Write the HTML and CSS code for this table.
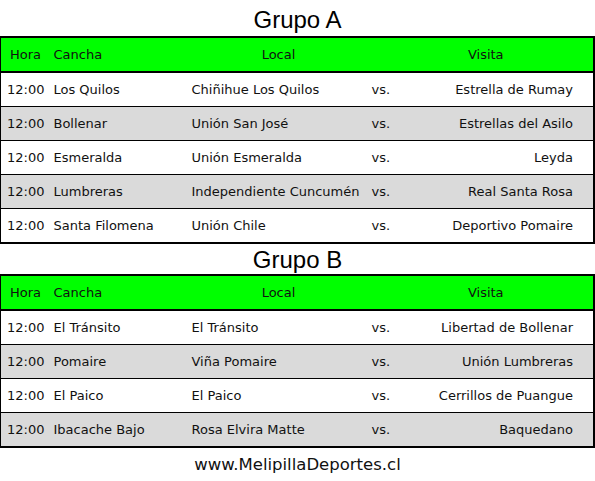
FILE: index.html
```html
<!DOCTYPE html>
<html lang="es">
<head>
<meta charset="utf-8">
<title>Fixture</title>
<link rel="stylesheet" href="styles.css">
</head>
<body>
<div class="page">
  <h2 class="group-title">Grupo A</h2>
  <table class="fixture">
    <colgroup><col class="c-hora"><col class="c-cancha"><col class="c-local"><col class="c-vs"><col class="c-visita"></colgroup>
    <thead>
      <tr><th class="hora">Hora</th><th class="cancha">Cancha</th><th class="local">Local</th><th></th><th class="visita">Visita</th></tr>
    </thead>
    <tbody>
      <tr><td class="hora">12:00</td><td class="cancha">Los Quilos</td><td class="local">Chiñihue Los Quilos</td><td class="vs">vs.</td><td class="visita">Estrella de Rumay</td></tr>
      <tr class="alt"><td class="hora">12:00</td><td class="cancha">Bollenar</td><td class="local">Unión San José</td><td class="vs">vs.</td><td class="visita">Estrellas del Asilo</td></tr>
      <tr><td class="hora">12:00</td><td class="cancha">Esmeralda</td><td class="local">Unión Esmeralda</td><td class="vs">vs.</td><td class="visita">Leyda</td></tr>
      <tr class="alt"><td class="hora">12:00</td><td class="cancha">Lumbreras</td><td class="local">Independiente Cuncumén</td><td class="vs">vs.</td><td class="visita">Real Santa Rosa</td></tr>
      <tr><td class="hora">12:00</td><td class="cancha">Santa Filomena</td><td class="local">Unión Chile</td><td class="vs">vs.</td><td class="visita">Deportivo Pomaire</td></tr>
    </tbody>
  </table>
  <h2 class="group-title">Grupo B</h2>
  <table class="fixture">
    <colgroup><col class="c-hora"><col class="c-cancha"><col class="c-local"><col class="c-vs"><col class="c-visita"></colgroup>
    <thead>
      <tr><th class="hora">Hora</th><th class="cancha">Cancha</th><th class="local">Local</th><th></th><th class="visita">Visita</th></tr>
    </thead>
    <tbody>
      <tr><td class="hora">12:00</td><td class="cancha">El Tránsito</td><td class="local">El Tránsito</td><td class="vs">vs.</td><td class="visita">Libertad de Bollenar</td></tr>
      <tr class="alt"><td class="hora">12:00</td><td class="cancha">Pomaire</td><td class="local">Viña Pomaire</td><td class="vs">vs.</td><td class="visita">Unión Lumbreras</td></tr>
      <tr><td class="hora">12:00</td><td class="cancha">El Paico</td><td class="local">El Paico</td><td class="vs">vs.</td><td class="visita">Cerrillos de Puangue</td></tr>
      <tr class="alt"><td class="hora">12:00</td><td class="cancha">Ibacache Bajo</td><td class="local">Rosa Elvira Matte</td><td class="vs">vs.</td><td class="visita">Baquedano</td></tr>
    </tbody>
  </table>
  <p class="footer">www.MelipillaDeportes.cl</p>
</div>
</body>
</html>
```
FILE: styles.css
```css
html, body {
  margin: 0;
  padding: 0;
  background: #fff;
}
.page {
  width: 595px;
  font-family: "DejaVu Sans", Verdana, sans-serif;
  color: #111;
}
.group-title {
  margin: 0;
  height: 36px;
  line-height: 40px;
  text-align: center;
  font-family: "Liberation Sans", Arial, sans-serif;
  font-weight: normal;
  font-size: 24px;
  color: #000;
}
.fixture + .group-title {
  height: 30px;
  line-height: 32px;
}
.fixture {
  width: 595px;
  border-collapse: collapse;
  table-layout: fixed;
  font-size: 13px;
  border-left: 1px solid #000;
  border-right: 2px solid #000;
  border-top: 2px solid #000;
  border-bottom: 2px solid #000;
}
.c-hora { width: 48px; }
.c-cancha { width: 138px; }
.c-local { width: 179px; }
.c-vs { width: 35px; }
.c-visita { width: auto; }
.fixture th {
  background: #00ff00;
  font-weight: normal;
  height: 33px;
  padding: 0;
  border-bottom: 2px solid #000;
  text-align: left;
}
.fixture td {
  height: 33px;
  padding: 0;
  border-top: 1px solid #000;
  white-space: nowrap;
}
.fixture tbody tr:first-child td {
  border-top: none;
}
.fixture tr.alt td {
  background: #dadada;
}
.fixture .hora { padding-left: 6px; }
.fixture th.hora { padding-left: 9px; }
.fixture .cancha { padding-left: 5px; }
.fixture td.local { padding-left: 5px; }
.fixture th.local { text-align: center; padding-left: 5px; }
.fixture .vs { padding-left: 6px; }
.fixture td.visita { text-align: right; padding-right: 20px; }
.fixture th.visita { text-align: center; padding-right: 22px; }
.footer {
  margin: 0;
  height: 34px;
  line-height: 34px;
  text-align: center;
  font-size: 16.5px;
  color: #111;
}
```
